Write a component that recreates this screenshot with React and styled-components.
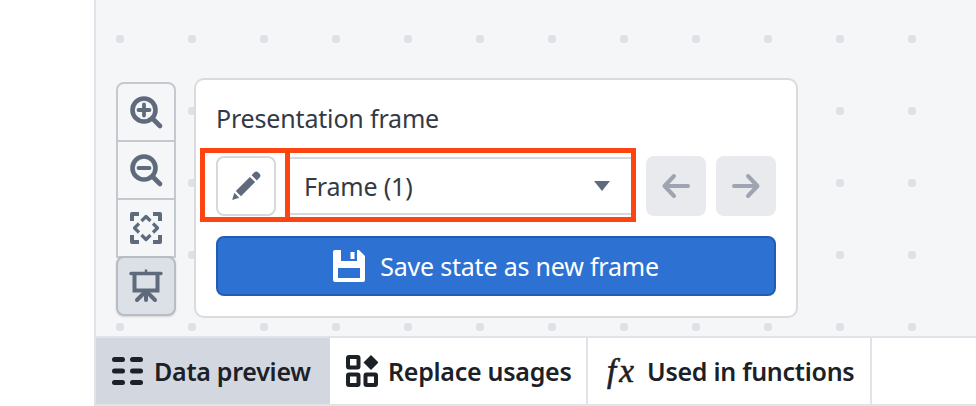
import React from "react";
import styled, { createGlobalStyle } from "styled-components";

const GlobalStyle = createGlobalStyle`
  html, body {
    margin: 0;
    padding: 0;
    background: #fff;
  }
  body {
    font-family: "Noto Sans", "Open Sans", sans-serif;
    overflow: hidden;
  }
`;

const ZoomIn = () => (
  <svg width="36" height="36" viewBox="0 0 36 36" fill="none">
    <circle cx="16" cy="16" r="11.5" stroke="#5f6b7c" strokeWidth="4.6" />
    <path d="M25 25l7 7" stroke="#5f6b7c" strokeWidth="4.6" strokeLinecap="round" />
    <path d="M10.5 16h11M16 10.5v11" stroke="#5f6b7c" strokeWidth="3.8" strokeLinecap="round" />
  </svg>
);

const ZoomOut = () => (
  <svg width="36" height="36" viewBox="0 0 36 36" fill="none">
    <circle cx="16" cy="16" r="11.5" stroke="#5f6b7c" strokeWidth="4.6" />
    <path d="M25 25l7 7" stroke="#5f6b7c" strokeWidth="4.6" strokeLinecap="round" />
    <path d="M10.5 16h11" stroke="#5f6b7c" strokeWidth="3.8" strokeLinecap="round" />
  </svg>
);

const ZoomFit = () => (
  <svg width="32" height="32" viewBox="0 0 32 32" fill="none" stroke="#5f6b7c" strokeWidth="4">
    <path d="M9 2H2v7M23 2h7v7M2 23v7h7M30 23v7h-7" strokeLinejoin="round" />
    <path d="M9 11.500L4.500 16 9 20.500M23 11.500l4.500 4.500-4.500 4.500M11.500 9L16 4.500 20.500 9M11.500 23l4.500 4.500 4.500-4.500" strokeWidth="3.200" strokeLinejoin="round" />
  </svg>
);

const PresentationIcon = () => (
  <svg width="36" height="36" viewBox="0 0 36 36" fill="none" stroke="#5f6b7c">
    <path d="M3 5.500h30" strokeWidth="3.400" strokeLinecap="round" />
    <path d="M18 1.500v3" strokeWidth="2.500" />
    <path d="M6.500 6v16.500h23V6" strokeWidth="4" />
    <path d="M18 24v8M16 25l-7 7M20 25l7 7" strokeWidth="4" strokeLinecap="round" />
  </svg>
);

const Pencil = () => (
  <svg width="32" height="32" viewBox="0 0 32 32" fill="#5f6b7c">
    <path d="M24.200 2.600a3 3 0 0 1 4.200 0l1 1a3 3 0 0 1 0 4.200l-2.600 2.600-5.200-5.200z" />
    <path d="M19.900 6.900l5.200 5.200L11 26.200 5.800 21z" />
    <path d="M4.300 22.800l4.900 4.900L2.200 30z" />
  </svg>
);

const ArrowLeft = () => (
  <svg width="30" height="30" viewBox="0 0 30 30" fill="none" stroke="#9ea5b0" strokeWidth="4" strokeLinecap="round" strokeLinejoin="round">
    <path d="M27 15H4M13 5L3.500 15 13 25" />
  </svg>
);

const ArrowRight = () => (
  <svg width="30" height="30" viewBox="0 0 30 30" fill="none" stroke="#9ea5b0" strokeWidth="4" strokeLinecap="round" strokeLinejoin="round">
    <path d="M3 15h23M17 5l9.500 10L17 25" />
  </svg>
);

const Caret = () => (
  <svg width="16" height="10" viewBox="0 0 16 10" fill="#5f6b7c">
    <path d="M0 0h16L8 10z" />
  </svg>
);

const Floppy = () => (
  <svg width="32" height="32" viewBox="0 0 32 32" fill="#fff" fillRule="evenodd">
    <path d="M2 0h6v11h16V0h2l6 6v24a2 2 0 0 1-2 2H2a2 2 0 0 1-2-2V2a2 2 0 0 1 2-2zM5 18v10h22V18z" />
    <rect x="17.500" y="2" width="4" height="7" />
  </svg>
);

const ListIcon = () => (
  <svg width="32" height="30" viewBox="0 0 32 30" fill="#1c2127">
    <rect x="0" y="1" width="13" height="5" rx="2.500" />
    <rect x="18" y="1" width="13" height="5" rx="2.500" />
    <rect x="0" y="12.500" width="13" height="5" rx="2.500" />
    <rect x="18" y="12.500" width="13" height="5" rx="2.500" />
    <rect x="0" y="24" width="13" height="5" rx="2.500" />
    <rect x="18" y="24" width="13" height="5" rx="2.500" />
  </svg>
);

const UsagesIcon = () => (
  <svg width="32" height="32" viewBox="0 0 32 32" fill="none" stroke="#1c2127" strokeWidth="4">
    <rect x="2" y="2" width="10.500" height="10.500" rx="1" />
    <rect x="2" y="19.500" width="10.500" height="10.500" rx="1" />
    <rect x="19.500" y="19.500" width="10.500" height="10.500" rx="1" />
    <path d="M25 0l7.500 7.500L25 15l-7.500-7.500z" fill="#1c2127" stroke="none" />
  </svg>
);

const Page = styled.div`
  width: 976px;
  height: 406px;
  display: flex;
  flex-direction: column;
  padding-left: 94px;
  box-sizing: border-box;
  background: #fff;
`;

const Canvas = styled.div`
  height: 336px;
  box-sizing: border-box;
  border-left: 2px solid #e0e3e8;
  background-color: #f5f6f8;
  background-image: radial-gradient(circle, #dce0e7 4px, transparent 4.500px);
  background-size: 72px 72px;
  background-position: -12px 3px;
  display: flex;
  align-items: flex-start;
  padding: 78px 0 0 20px;
  gap: 18px;
`;

const Toolbar = styled.div`
  width: 60px;
  margin-top: 4px;
  display: flex;
  flex-direction: column;
`;

const ToolButton = styled.div`
  height: 60px;
  box-sizing: border-box;
  display: flex;
  align-items: center;
  justify-content: center;
  border: 2px solid #c5c8ce;
  margin-top: ${(p) => (p.$first ? 0 : -2)}px;
  border-radius: ${(p) => (p.$first ? "8px 8px 0 0" : p.$active ? "8px" : "0")};
  background: ${(p) => (p.$active ? "#dce0e7" : "#f5f6f8")};
  ${(p) => p.$active && "border-color: #b9bcc3; box-shadow: 0 1px 2px rgba(17,20,24,0.15);"}
  position: relative;
`;

const Panel = styled.div`
  width: 604px;
  height: 240px;
  box-sizing: border-box;
  background: #fff;
  border: 2px solid #d9dbdf;
  border-radius: 10px;
  padding: 20px;
  display: flex;
  flex-direction: column;
`;

const Title = styled.div`
  font-size: 25px;
  line-height: 36px;
  height: 36px;
  color: #333a45;
  letter-spacing: -0.17px;
`;

const Controls = styled.div`
  display: flex;
  align-items: center;
  margin-top: 20px;
  height: 60px;
`;

const IconButton = styled.div`
  width: 60px;
  height: 60px;
  box-sizing: border-box;
  flex: none;
  display: flex;
  align-items: center;
  justify-content: center;
  border-radius: 8px;
  border: ${(p) => (p.$disabled ? "none" : "2px solid #d6d8dc")};
  background: ${(p) => (p.$disabled ? "#e8eaee" : "#fff")};
  margin-left: ${(p) => p.$ml || 0}px;
`;

const Select = styled.div`
  width: 342px;
  height: 58px;
  margin-left: 14px;
  box-sizing: border-box;
  flex: none;
  display: flex;
  align-items: center;
  justify-content: space-between;
  padding: 0 22px 0 14px;
  border-top: 2px solid #d6d8dc;
  border-bottom: 2px solid #d6d8dc;
  font-size: 25px;
  letter-spacing: -0.17px;
  color: #333a45;
`;

const SaveButton = styled.div`
  margin-top: 20px;
  height: 60px;
  box-sizing: border-box;
  background: #2d72d2;
  border: 2px solid #215db0;
  border-radius: 8px;
  display: flex;
  align-items: center;
  justify-content: center;
  gap: 15px;
  color: #fff;
  font-size: 25px;
  letter-spacing: -0.2px;
`;

const Highlight = styled.div`
  position: absolute;
  box-sizing: border-box;
  border: 5px solid #fd4411;
  top: ${(p) => p.$top}px;
  left: ${(p) => p.$left}px;
  width: ${(p) => p.$w}px;
  height: ${(p) => p.$h}px;
  pointer-events: none;
`;

const TabBar = styled.div`
  height: 70px;
  box-sizing: border-box;
  display: flex;
  border-top: 2px solid #e0e3e8;
  border-bottom: 2px solid #e0e3e8;
  border-left: 2px solid #e0e3e8;
`;

const Tab = styled.div`
  width: ${(p) => p.$w}px;
  box-sizing: border-box;
  display: flex;
  align-items: center;
  gap: 10px;
  padding-left: 16px;
  font-size: 25px;
  font-weight: 600;
  letter-spacing: -0.27px;
  color: #1c2127;
  background: ${(p) => (p.$active ? "#d3d8e0" : "#fff")};
  border-right: ${(p) => (p.$active ? "none" : "2px solid #e0e3e8")};
`;

const Fx = styled.span`
  width: 33px;
  font-family: "Liberation Serif", serif;
  font-style: italic;
  font-weight: 400;
  font-size: 33px;
  letter-spacing: 3px;
  line-height: 1;
  padding-left: 3px;
  box-sizing: border-box;
  -webkit-text-stroke: 0.6px #1c2127;
`;

export default function App() {
  return (
    <>
      <GlobalStyle />
      <Page>
        <Canvas>
          <Toolbar>
            <ToolButton $first><ZoomIn /></ToolButton>
            <ToolButton><ZoomOut /></ToolButton>
            <ToolButton><ZoomFit /></ToolButton>
            <ToolButton $active><PresentationIcon /></ToolButton>
          </Toolbar>
          <Panel>
            <Title>Presentation frame</Title>
            <Controls>
              <IconButton><Pencil /></IconButton>
              <Select>
                <span>Frame (1)</span>
                <Caret />
              </Select>
              <IconButton $disabled $ml={14}><ArrowLeft /></IconButton>
              <IconButton $disabled $ml={10}><ArrowRight /></IconButton>
            </Controls>
            <SaveButton><Floppy />Save state as new frame</SaveButton>
          </Panel>
        </Canvas>
        <TabBar>
          <Tab $active $w={234}><ListIcon />Data preview</Tab>
          <Tab $w={258}><UsagesIcon />Replace usages</Tab>
          <Tab $w={284}><Fx>fx</Fx>Used in functions</Tab>
        </TabBar>
      </Page>
      <Highlight $left={200} $top={148} $w={90} $h={74} />
      <Highlight $left={285} $top={148} $w={351} $h={74} />
    </>
  );
}
